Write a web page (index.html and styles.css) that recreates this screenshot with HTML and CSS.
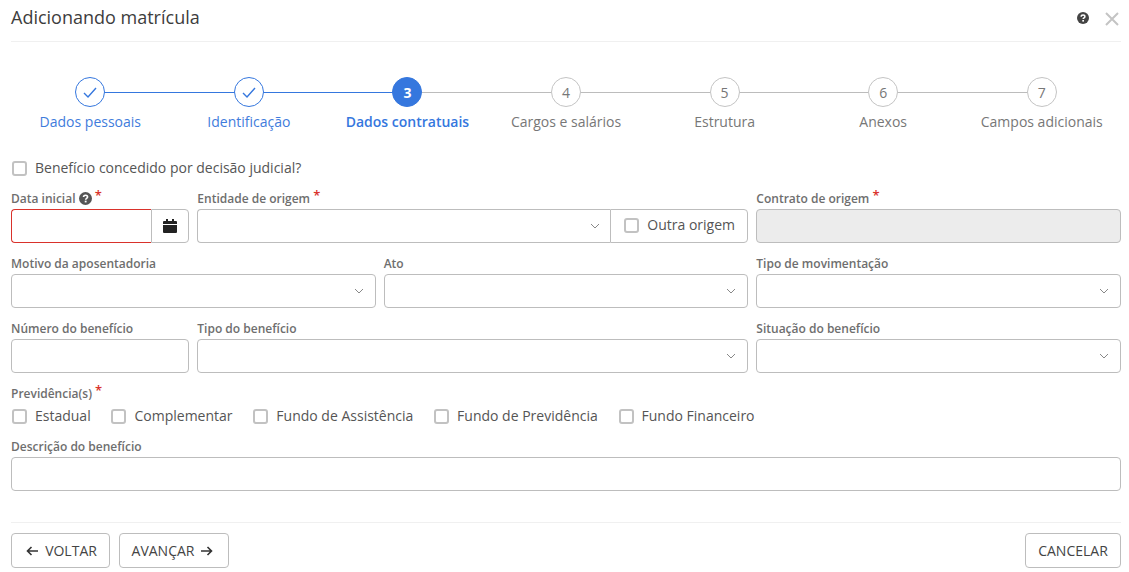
FILE: index.html
```html
<!DOCTYPE html>
<html lang="pt-BR">
<head>
<meta charset="utf-8">
<title>Adicionando matrícula</title>
<link rel="stylesheet" href="styles.css">
</head>
<body>
<div class="modal">
  <header class="head">
    <h1 class="title">Adicionando matrícula</h1>
    <div class="head-icons">
      <svg class="help-lg" viewBox="0 0 12 12"><circle cx="6" cy="6" r="6" fill="#444"/><path d="M4.2 4.7c0-2.2 3.7-2.2 3.7 0 0 1.3-1.7 1.2-1.7 2.4" fill="none" stroke="#fff" stroke-width="1.5"/><rect x="5.3" y="8" width="1.7" height="1.6" fill="#fff"/></svg>
      <svg class="close" viewBox="0 0 14 14"><path d="M1 1l12 12M13 1L1 13" fill="none" stroke="#c4c4c4" stroke-width="2"/></svg>
    </div>
  </header>

  <ol class="steps">
    <li class="step done"><span class="dot"><svg class="check" viewBox="0 0 14 11"><path d="M1 6l4 4 8-9" fill="none" stroke="#3577de" stroke-width="1.4"/></svg></span><span class="step-label">Dados pessoais</span></li>
    <li class="step done"><span class="dot"><svg class="check" viewBox="0 0 14 11"><path d="M1 6l4 4 8-9" fill="none" stroke="#3577de" stroke-width="1.4"/></svg></span><span class="step-label">Identificação</span></li>
    <li class="step current"><span class="dot">3</span><span class="step-label">Dados contratuais</span></li>
    <li class="step"><span class="dot">4</span><span class="step-label">Cargos e salários</span></li>
    <li class="step"><span class="dot">5</span><span class="step-label">Estrutura</span></li>
    <li class="step"><span class="dot">6</span><span class="step-label">Anexos</span></li>
    <li class="step"><span class="dot">7</span><span class="step-label">Campos adicionais</span></li>
  </ol>

  <label class="check-item solo"><span class="box"></span>Benefício concedido por decisão judicial?</label>

  <div class="grid">
    <div class="field c2">
      <div class="lbl">Data inicial <svg class="help" viewBox="0 0 12 12"><circle cx="6" cy="6" r="6" fill="#555"/><path d="M4.2 4.7c0-2.2 3.7-2.2 3.7 0 0 1.3-1.7 1.2-1.7 2.4" fill="none" stroke="#fff" stroke-width="1.5"/><rect x="5.3" y="8" width="1.7" height="1.6" fill="#fff"/></svg> <span class="req">*</span></div>
      <div class="group">
        <div class="input invalid"></div>
        <div class="addon cal"><svg class="cal-icon" viewBox="0 0 14 14"><path d="M3 0h2v2h4V0h2v2h2a1 1 0 0 1 1 1v2H0V3a1 1 0 0 1 1-1h2zM0 6h14v7a1 1 0 0 1-1 1H1a1 1 0 0 1-1-1z" fill="#222"/></svg></div>
      </div>
    </div>
    <div class="field c6">
      <div class="lbl">Entidade de origem <span class="req">*</span></div>
      <div class="group">
        <div class="input select joined"><svg class="chev" viewBox="0 0 10 6"><path d="M1 1l4 4 4-4" fill="none" stroke="#888" stroke-width="1"/></svg></div>
        <label class="addon other"><span class="box other-box"></span><span class="other-text">Outra origem</span></label>
      </div>
    </div>
    <div class="field c4">
      <div class="lbl">Contrato de origem <span class="req">*</span></div>
      <div class="input disabled"></div>
    </div>

    <div class="field c4">
      <div class="lbl">Motivo da aposentadoria</div>
      <div class="input select"><svg class="chev" viewBox="0 0 10 6"><path d="M1 1l4 4 4-4" fill="none" stroke="#888" stroke-width="1"/></svg></div>
    </div>
    <div class="field c4">
      <div class="lbl">Ato</div>
      <div class="input select"><svg class="chev" viewBox="0 0 10 6"><path d="M1 1l4 4 4-4" fill="none" stroke="#888" stroke-width="1"/></svg></div>
    </div>
    <div class="field c4">
      <div class="lbl">Tipo de movimentação</div>
      <div class="input select"><svg class="chev" viewBox="0 0 10 6"><path d="M1 1l4 4 4-4" fill="none" stroke="#888" stroke-width="1"/></svg></div>
    </div>

    <div class="field c2">
      <div class="lbl">Número do benefício</div>
      <div class="input"></div>
    </div>
    <div class="field c6">
      <div class="lbl">Tipo do benefício</div>
      <div class="input select"><svg class="chev" viewBox="0 0 10 6"><path d="M1 1l4 4 4-4" fill="none" stroke="#888" stroke-width="1"/></svg></div>
    </div>
    <div class="field c4">
      <div class="lbl">Situação do benefício</div>
      <div class="input select"><svg class="chev" viewBox="0 0 10 6"><path d="M1 1l4 4 4-4" fill="none" stroke="#888" stroke-width="1"/></svg></div>
    </div>
  </div>

  <div class="lbl prev-lbl">Previdência(s) <span class="req">*</span></div>
  <div class="checks">
    <label class="check-item"><span class="box"></span>Estadual</label>
    <label class="check-item"><span class="box"></span>Complementar</label>
    <label class="check-item"><span class="box"></span>Fundo de Assistência</label>
    <label class="check-item"><span class="box"></span>Fundo de Previdência</label>
    <label class="check-item"><span class="box"></span>Fundo Financeiro</label>
  </div>

  <div class="field desc">
    <div class="lbl">Descrição do benefício</div>
    <div class="input"></div>
  </div>

  <footer class="foot">
    <button class="btn back"><svg class="arrow" viewBox="0 0 12 10"><path d="M12 5H1.5M5.5 1L1.5 5l4 4" fill="none" stroke="#333" stroke-width="1.6"/></svg>VOLTAR</button>
    <button class="btn next">AVANÇAR<svg class="arrow" viewBox="0 0 12 10"><path d="M0 5h10.5M6.5 1l4 4-4 4" fill="none" stroke="#333" stroke-width="1.6"/></svg></button>
    <button class="btn cancel">CANCELAR</button>
  </footer>
</div>
</body>
</html>
```
FILE: styles.css
```css
* { box-sizing: border-box; }
html, body { margin: 0; padding: 0; background: #fff; }
body { font-family: "Open Sans", sans-serif; color: #444; font-size: 14px; overflow: hidden; }
.modal { width: 1129px; height: 572px; padding: 0 8px 0 11px; }

.head { height: 42px; border-bottom: 1px solid #f0f0f0; display: flex; justify-content: space-between; align-items: flex-start; }
.title { margin: 5px 0 0; font-size: 18px; font-weight: 400; line-height: 24px; color: #3d3d3d; }
.head-icons { display: flex; align-items: center; gap: 16px; margin: 10px 2px 0 0; }
.help-lg { width: 12px; height: 12px; display: block; }
.close { width: 14px; height: 14px; display: block; margin-top: 2px; }

.steps { list-style: none; display: flex; margin: 35px 0 0; padding: 0; }
.step { flex: 1 1 0; display: flex; flex-direction: column; align-items: center; position: relative; color: #777; }
.step:not(:last-child)::after { content: ""; position: absolute; left: 50%; width: 100%; top: 15px; height: 1px; background: #bcbcbc; }
.step.done:not(:last-child)::after { background: #3577de; }
.dot { width: 30px; height: 30px; border-radius: 50%; border: 1px solid #c4c4c4; background: #fff; display: flex; align-items: center; justify-content: center; font-size: 14px; color: #777; position: relative; z-index: 1; }
.done .dot { border-color: #3577de; }
.current .dot { background: #3577de; border-color: #3577de; color: #fff; font-weight: 700; }
.check { width: 14px; height: 11px; display: block; }
.step-label { font-size: 14px; line-height: 20px; margin-top: 5px; white-space: nowrap; }
.done .step-label { color: #3f7cdc; }
.current .step-label { color: #3577de; font-weight: 600; }

.box { width: 15px; height: 15px; border: 2px solid #c2c2c2; border-radius: 3px; background: #fff; flex: none; display: block; }
.check-item { display: flex; align-items: center; gap: 8px; font-size: 14px; line-height: 20px; color: #555; }
.solo { margin: 26px 0 0 1px; }

.grid { display: grid; grid-template-columns: repeat(12, 1fr); column-gap: 8px; row-gap: 11px; margin-top: 11px; }
.c2 { grid-column: span 2; }
.c4 { grid-column: span 4; }
.c6 { grid-column: span 6; }
.lbl { font-size: 12px; font-weight: 600; line-height: 16px; height: 20px; padding-top: 2px; color: #6e6e6e; white-space: nowrap; }
.req { color: #d9322b; font-size: 13px; line-height: 10px; font-weight: 600; position: relative; top: -3px; }
.help { width: 13px; height: 13px; vertical-align: -2px; }

.input { height: 34px; border: 1px solid #bdbdbd; border-radius: 4px; background: #fff; display: flex; align-items: center; justify-content: flex-end; padding-right: 11px; flex: 1 1 auto; min-width: 0; }
.disabled { background: #ececec; }
.chev { width: 10px; height: 6px; display: block; }
.group { display: flex; height: 34px; }
.invalid { border-color: #d9322b; border-right: 0; border-radius: 4px 0 0 4px; }
.joined { border-right: 0; border-radius: 4px 0 0 4px; padding-right: 10px; }
.addon { display: flex; align-items: center; border: 1px solid #bdbdbd; border-radius: 0 4px 4px 0; flex: none; }
.cal { width: 38px; justify-content: center; }
.cal-icon { width: 14px; height: 14px; display: block; }
.other { width: 138px; padding-left: 13px; gap: 8px; color: #555; }
.other-box { margin-bottom: 1px; }
.other-text { margin-bottom: 4px; }

.prev-lbl { margin-top: 11px; }
.checks { display: flex; gap: 20.8px; margin: 2px 0 0 1px; }
.desc { margin-top: 11px; }

.foot { margin-top: 31px; border-top: 1px solid #f0f0f0; padding-top: 10px; display: flex; gap: 9px; }
.btn { height: 35px; border: 1px solid #bdbdbd; border-radius: 4px; background: #fff; font-family: inherit; font-size: 14px; color: #444; display: flex; align-items: center; justify-content: center; gap: 7px; padding: 0; }
.back { width: 99px; padding-left: 2px; }
.next { width: 110px; padding-right: 3px; }
.cancel { width: 96px; margin-left: auto; }
.arrow { width: 12px; height: 10px; display: block; }
```
